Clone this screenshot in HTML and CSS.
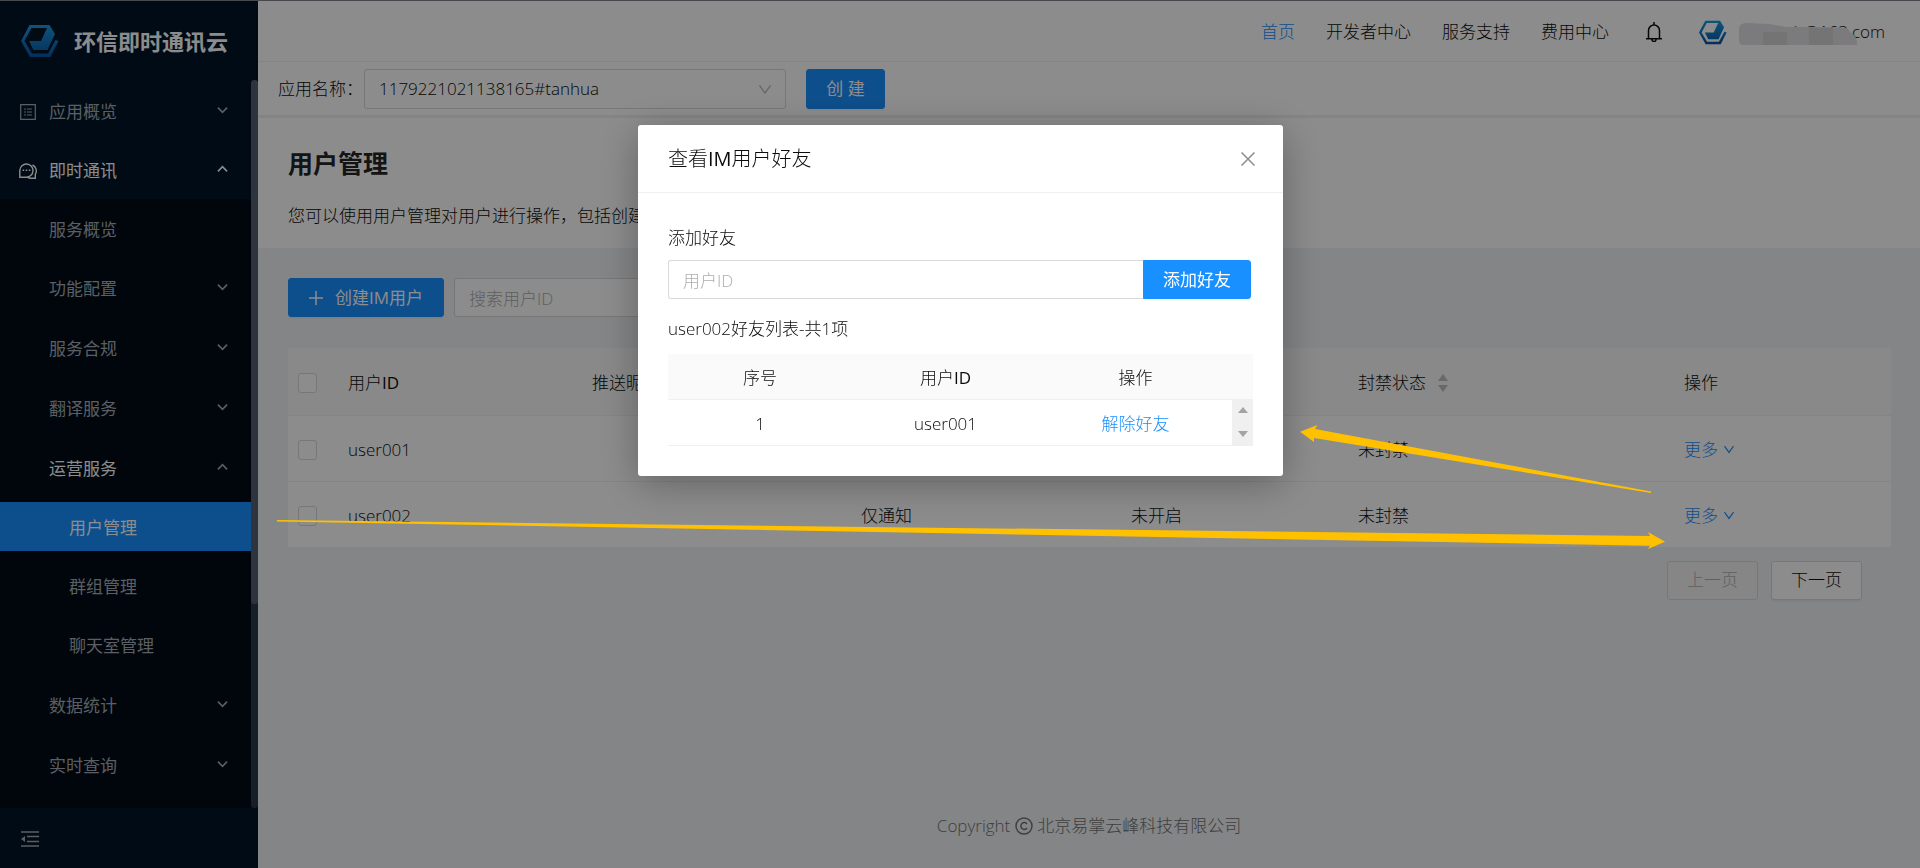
FILE: index.html
```html
<!DOCTYPE html>
<html lang="zh-CN">
<head>
<meta charset="utf-8">
<title>用户管理</title>
<link rel="stylesheet" href="styles.css">
</head>
<body>
<svg class="defs" width="0" height="0" aria-hidden="true">
  <linearGradient id="brand" x1="0" y1="0" x2="0" y2="1"><stop offset="0" stop-color="#1a9be0"/><stop offset="1" stop-color="#0a55a8"/></linearGradient>
  <symbol id="logo" viewBox="0 0 38 32"><path fill="url(#brand)" d="M0 16L8.500 0H28.500L34 9L26.500 25H12.500L8 16H20L26 3H10.500L3.500 16L11 28.500H27L34.500 15L37.500 16L29.500 32H9Z"/></symbol>
  <symbol id="down" viewBox="0 0 12 8"><path d="M1 1.500L6 6.500L11 1.500" fill="none" stroke="currentColor" stroke-width="1.800"/></symbol>
  <symbol id="up" viewBox="0 0 12 8"><path d="M1 6.500L6 1.500L11 6.500" fill="none" stroke="currentColor" stroke-width="1.800"/></symbol>
  <symbol id="vee" viewBox="0 0 12 9"><path d="M.5.5L6 8L11.500.5" fill="none" stroke="currentColor" stroke-width="1.400"/></symbol>
</svg>
<div class="page">
  <aside class="side">
    <div class="brand"><svg class="brand-logo"><use href="#logo"/></svg><span>环信即时通讯云</span></div>
    <div class="side-scroll">
      <nav class="menu">
        <a class="item top" href="#"><svg class="ico" viewBox="0 0 16 16"><path d="M.7.7h14.600v14.600H.7zM4 5h2M7 5h5M4 8h2M7 8h5M4 11h2M7 11h5" fill="none" stroke="currentColor" stroke-width="1.200"/></svg>应用概览<svg class="chev"><use href="#down"/></svg></a>
        <a class="item top on" href="#"><svg class="ico" viewBox="0 0 16 16"><path d="M-.2 14.200V7.200a6.600 6.600 0 1 1 6.600 7zM12.500 2a6.500 6.500 0 0 1 2.800 9.500v3.700H10a6.500 6.500 0 0 1-2.500-1" fill="none" stroke="currentColor" stroke-width="1.400"/><path d="M2.600 7.300h1.600M5.700 7.300h1.600M8.800 7.300h1.600" stroke="currentColor" stroke-width="1.600"/></svg>即时通讯<svg class="chev"><use href="#up"/></svg></a>
        <div class="sub">
          <a class="item leaf" href="#">服务概览</a>
          <a class="item" href="#">功能配置<svg class="chev"><use href="#down"/></svg></a>
          <a class="item" href="#">服务合规<svg class="chev"><use href="#down"/></svg></a>
          <a class="item" href="#">翻译服务<svg class="chev"><use href="#down"/></svg></a>
          <a class="item leaf open" href="#">运营服务<svg class="chev"><use href="#up"/></svg></a>
          <a class="item leaf deep selected" href="#">用户管理</a>
          <a class="item leaf deep" href="#">群组管理</a>
          <a class="item deep" href="#">聊天室管理</a>
          <a class="item" href="#">数据统计<svg class="chev"><use href="#down"/></svg></a>
          <a class="item" href="#">实时查询<svg class="chev"><use href="#down"/></svg></a>
        </div>
      </nav>
      <div class="track"><div class="thumb"></div></div>
    </div>
    <div class="side-foot"><button class="fold" aria-label="收起菜单"><svg viewBox="0 0 18 16"><path d="M0 1h18M6 5.500h12M6 10.500h12M0 15h18" stroke="currentColor" stroke-width="1.600"/><path d="M0 8L4 5v6z" fill="currentColor"/></svg></button></div>
  </aside>
  <div class="main">
    <header class="head">
      <a class="active" href="#">首页</a><a href="#">开发者中心</a><a href="#">服务支持</a><a href="#">费用中心</a>
      <button class="bell" aria-label="通知"><svg viewBox="0 0 16 20"><path d="M2.500 16.500V8.500a5.500 5.500 0 0 1 11 0v8M0 16.700h16M8 0v3M6 17.500a2 2 0 0 0 4 0" fill="none" stroke="currentColor" stroke-width="1.500"/></svg></button>
      <a class="user" href="#"><svg class="user-logo"><use href="#logo"/></svg><span class="mail">h@163.com<svg class="mosaic" viewBox="0 0 118 22"><path fill="#e0e0e3" d="M0 5Q1 0 8 0L30 1L48 4L84 4L108 5L112 10Q118 12 118 22H5Q0 22 0 17Z"/><path fill="#d3d3d6" d="M24 9h24v13H24zM70 5h24v17H70z"/></svg></span></a>
    </header>
    <div class="appbar">
      <label for="app">应用名称：</label>
      <span class="select-box"><select id="app"><option>1179221021138165#tanhua</option></select><svg><use href="#vee"/></svg></span>
      <button class="btn primary create">创 建</button>
    </div>
    <section class="intro"><h1>用户管理</h1><p>您可以使用用户管理对用户进行操作，包括创建</p></section>
    <section class="content">
      <div class="tools"><button class="btn primary add"><svg viewBox="0 0 14 14"><path d="M7 0v14M0 7h14" stroke="currentColor" stroke-width="1.500"/></svg>创建IM用户</button><input class="field search" type="text" placeholder="搜索用户ID" aria-label="搜索用户ID"></div>
      <table class="users">
        <colgroup><col class="c-check"><col class="c-id"><col class="c-nick"><col class="c-push"><col class="c-quiet"><col class="c-state"><col></colgroup>
        <thead><tr><th><input type="checkbox" aria-label="全选"></th><th>用户<b>ID</b></th><th>推送昵称</th><th></th><th></th><th>封禁状态<svg class="sort" viewBox="0 0 10 18"><path fill="currentColor" d="M5 0l5 7H0zM5 18l5-7H0z"/></svg></th><th>操作</th></tr></thead>
        <tbody>
          <tr><td><input type="checkbox" aria-label="user001"></td><td>user001</td><td></td><td>仅通知</td><td>未开启</td><td>未封禁</td><td><a href="#">更多<svg><use href="#vee"/></svg></a></td></tr>
          <tr><td><input type="checkbox" aria-label="user002"></td><td>user002</td><td></td><td>仅通知</td><td>未开启</td><td>未封禁</td><td><a href="#">更多<svg><use href="#vee"/></svg></a></td></tr>
        </tbody>
      </table>
      <div class="pager"><button class="btn" disabled>上一页</button><button class="btn">下一页</button></div>
    </section>
    <footer class="foot">Copyright <svg viewBox="0 0 18 18"><g fill="none" stroke="currentColor" stroke-width="1.500"><circle cx="9" cy="9" r="8"/><path d="M12 7a3.400 3.400 0 1 0 0 4"/></g></svg> 北京易掌云峰科技有限公司</footer>
  </div>
</div>
<div class="mask">
  <div class="modal" role="dialog" aria-labelledby="dlg">
    <div class="modal-head"><h2 id="dlg">查看<b>IM</b>用户好友</h2><button class="close" aria-label="关闭"><svg viewBox="0 0 14 14"><path d="M.5.5l13 13M13.500.5l-13 13" stroke="currentColor" stroke-width="1.500"/></svg></button></div>
    <div class="modal-body">
      <label for="friend">添加好友</label>
      <div class="group"><input class="field" id="friend" type="text" placeholder="用户ID"><button class="btn primary">添加好友</button></div>
      <p>user002好友列表-共1项</p>
      <table class="friends">
        <colgroup><col class="f-no"><col class="f-id"><col class="f-op"><col></colgroup>
        <thead><tr><th>序号</th><th>用户<b>ID</b></th><th>操作</th><th></th></tr></thead>
        <tbody><tr><td>1</td><td>user001</td><td><a href="#">解除好友</a></td><td class="bar"><svg viewBox="0 0 10 32"><path fill="currentColor" d="M5 1l5 6H0zM5 31l5-6H0z"/></svg></td></tr></tbody>
      </table>
    </div>
  </div>
</div>
<svg class="arrows" width="1920" height="868" aria-hidden="true"><path fill="#ffc000" d="M277 520L1650 536L1648 532L1665 541.700L1648 549L1650 545.700L277 521.500ZM1651 493L1314 438L1314 442L1300 431.700L1317.500 425L1315 429L1651 491.500Z"/></svg>
</body>
</html>
```
FILE: styles.css
```css
* { box-sizing: border-box; }
body { margin: 0; font: 300 17px/26px "Open Sans", "Noto Sans CJK SC", sans-serif; color: #0c0c0c; }
button, input, select { font: inherit; color: inherit; }
a { color: inherit; text-decoration: none; }
b { font-weight: 500; }
h1, h2, p { margin: 0; }
svg { flex: none; }
.defs { position: absolute; }
.page { display: flex; min-height: 100vh; border-top: 1px solid #88818e; background: #f0f2f5; }

.side { width: 258px; flex: none; display: flex; flex-direction: column; background: #001529; color: #a6adb4; height: calc(100vh - 1px); font-weight: 400; }
.brand { display: flex; align-items: center; gap: 15px; height: 79px; padding: 0 0 0 21px; color: #fff; font-size: 22px; font-weight: 700; }
.brand-logo { width: 38px; height: 32px; }
.side-scroll { flex: 1; display: flex; overflow: hidden; }
.menu { flex: 1; display: flex; flex-direction: column; padding-top: 1px; }
.item { display: flex; align-items: center; height: 50px; margin: 5px 0; padding: 2px 23px 0 49px; }
.item.top { padding-left: 20px; margin-bottom: 4px; }
.item.leaf { height: 49px; }
.item.deep { padding-left: 69px; }
.item.on, .item.open, .item.selected { color: #fff; }
.item.open .chev { color: #a6adb4; }
.item.selected { background: #1890ff; }
.ico { width: 16px; height: 16px; margin-right: 13px; overflow: visible; }
.chev { width: 11px; height: 8px; margin: 0 0 4px auto; }
.sub { flex: 1; background: #000c17; display: flex; flex-direction: column; }
.track { width: 7px; background: #28384a; border-radius: 4px; }
.thumb { height: 72%; background: #546070; border-radius: 4px; }
.side-foot { height: 60px; display: flex; align-items: center; padding: 2px 0 0 21px; }
.fold { border: 0; background: none; padding: 0; display: flex; color: #a6adb4; }
.fold svg { width: 18px; height: 16px; }

.main { flex: 1; min-width: 0; display: flex; flex-direction: column; }
.head { height: 61px; display: flex; align-items: center; justify-content: flex-end; gap: 31px; padding: 2px 35px 0 0; background: #fff; border-bottom: 1px solid #f0f0f0; }
.head .active { color: #1890ff; }
.bell { border: 0; background: none; padding: 0; margin: 0 6px; display: flex; }
.bell svg { width: 16px; height: 20px; }
.user { display: flex; align-items: center; gap: 12px; }
.user-logo { width: 28px; height: 25px; }
.mail { position: relative; width: 146px; text-align: right; }
.mosaic { position: absolute; left: 0; top: 4px; width: 118px; height: 22px; }
.appbar { display: flex; align-items: center; height: 56px; padding: 0 20px; gap: 1px; background: #fff; border-bottom: 3px solid #f0f0f0; }
.select-box { position: relative; width: 422px; }
.select-box select { display: block; width: 100%; height: 40px; padding: 0 14px; border: 1px solid #d9d9d9; border-radius: 3px; background: #fff; appearance: none; }
.select-box svg { position: absolute; right: 15px; top: 16px; width: 12px; height: 9px; color: #bfbfbf; }
.btn { height: 39px; padding: 0 19px; border: 1px solid #d9d9d9; border-radius: 3px; background: #fff; box-shadow: 0 2px 0 rgba(0,0,0,.03); white-space: nowrap; }
.btn.primary { background: #1890ff; border-color: #1890ff; color: #fff; font-weight: 400; }
.btn:disabled { background: #f5f5f5; color: #b0b0b0; box-shadow: none; }
.btn.create { margin-left: 19px; width: 79px; height: 40px; }
.intro { background: #fff; height: 130px; padding: 25px 30px; display: flex; flex-direction: column; gap: 20px; }
.intro h1 { font-size: 25px; line-height: 40px; color: #262626; }
.content { padding: 30px 29px 0 30px; }
.tools { display: flex; gap: 10px; }
.add { width: 156px; display: flex; align-items: center; justify-content: center; gap: 12px; }
.add svg { width: 14px; height: 14px; }
.field { height: 39px; padding: 2px 14px 0; border: 1px solid #d9d9d9; border-radius: 3px; background: #fff; }
.field::placeholder { color: #adadad; opacity: 1; }
.search { width: 300px; }
table { border-collapse: collapse; table-layout: fixed; width: 100%; }
th { font-weight: inherit; }
.users { margin-top: 31px; background: #fff; }
.users th { background: #fafafa; }
.users th, .users td { height: 66px; padding: 3px 10px 0; text-align: left; border-bottom: 1px solid #f0f0f0; }
.users th { height: 67px; }
.c-check { width: 50px; } .c-id { width: 244px; } .c-nick { width: 269px; } .c-push { width: 270px; } .c-quiet { width: 227px; } .c-state { width: 326px; }
.users input { display: block; appearance: none; width: 19px; height: 20px; margin: 0; border: 1px solid #d9d9d9; border-radius: 3px; background: #fff; }
.users a { color: #1890ff; }
.users a svg { width: 10px; height: 9px; margin-left: 6px; vertical-align: 2px; }
.sort { width: 10px; height: 18px; margin-left: 12px; vertical-align: -3px; color: #bfbfbf; }
.pager { display: flex; justify-content: flex-end; gap: 13px; padding: 13px 29px 0 0; }
.foot { margin-top: auto; padding-bottom: 29px; text-align: center; color: #737373; }
.foot svg { width: 18px; height: 18px; vertical-align: -3px; }

.mask { position: fixed; inset: 0; background: rgba(0,0,0,.45); display: flex; justify-content: center; align-items: flex-start; padding: 125px 0 0 1px; }
.modal { width: 645px; background: #fff; border-radius: 3px; box-shadow: 0 8px 40px rgba(0,0,0,.3); }
.modal-head { display: flex; align-items: center; justify-content: space-between; padding: 20px 28px 20px 30px; border-bottom: 1px solid #f0f0f0; }
.modal-head h2 { font-size: 20px; line-height: 27px; font-weight: inherit; }
.close { border: 0; background: none; padding: 0; display: flex; color: #8c8c8c; }
.close svg { width: 14px; height: 14px; }
.modal-body { padding: 32px 30px 30px; }
.group { display: flex; margin: 9px 2px 17px 0; }
.group .field { flex: 1; border-radius: 3px 0 0 3px; border-right: 0; }
.group .btn { border-radius: 0 3px 3px 0; }
.friends { margin-top: 12px; }
.friends th, .friends td { height: 46px; padding: 3px 0 0; text-align: center; border-bottom: 1px solid #f0f0f0; }
.friends th { height: 45px; background: #fafafa; }
.friends a { color: #1890ff; }
.f-no { width: 184px; } .f-id { width: 187px; } .f-op { width: 193px; }
.friends .bar { padding: 0; background: #f0f0f0; color: #a3a3a3; }
.bar svg { display: block; width: 10px; height: 32px; margin: 0 auto; }
.arrows { position: absolute; left: 0; top: 0; pointer-events: none; }
```
